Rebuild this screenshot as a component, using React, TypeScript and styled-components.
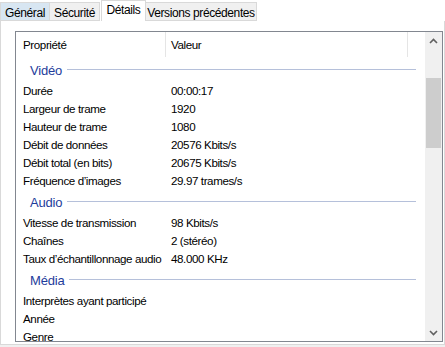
import React from "react";
import styled, { createGlobalStyle } from "styled-components";

const GlobalStyle = createGlobalStyle`
    html, body {
        margin: 0;
        padding: 0;
        background: #ffffff;
    }
    body {
        font-family: "Liberation Sans", Arial, sans-serif;
        font-size: 11.6px;
        letter-spacing: -0.4px;
        color: #000;
    }
`

const Window = styled.div`
    width: 445px;
    height: 347px;
    display: flex;
    flex-direction: column;
    background: #f0f0f0;
    overflow: hidden;
`

const TabStrip = styled.div`
    display: flex;
    align-items: flex-end;
    height: 21px;
    background: #ffffff;
    margin-bottom: -1px;
    position: relative;
    z-index: 1;
`

const Tab = styled.div<{ $width: number; $active?: boolean; $hover?: boolean }>`
    box-sizing: border-box;
    width: ${p => p.$width}px;
    height: ${p => (p.$active ? 21 : 19)}px;
    margin-left: ${p => (p.$active ? 1 : 0)}px;
    padding-top: ${p => (p.$active ? 2 : 3)}px;
    text-align: center;
    font-size: 12px;
    border: 1px solid #d9d9d9;
    border-bottom: ${p => (p.$active ? "none" : "1px solid #d9d9d9")};
    border-left: ${p => (p.$active ? "1px solid #d9d9d9" : "none")};
    background: ${p => (p.$active ? "#ffffff" : p.$hover ? "#d8e6f2" : "#f0f0f0")};
    white-space: nowrap;
    &:first-child {
        border-left: 1px solid #d9d9d9;
    }
`

const Panel = styled.div`
    box-sizing: border-box;
    height: 325px;
    background: #ffffff;
    border: 1px solid #d9d9d9;
    padding: 10px 1px 2px 14px;
`

const ListBox = styled.div`
    box-sizing: border-box;
    height: 311px;
    border: 1px solid #828790;
    display: flex;
    background: #ffffff;
`

const ListContent = styled.div`
    flex: 1;
    overflow: hidden;
    display: flex;
    flex-direction: column;
`

const HeaderRow = styled.div`
    display: flex;
    height: 25px;
    flex-shrink: 0;
`

const HeaderCell = styled.div<{ $width?: number; $pad: number }>`
    box-sizing: border-box;
    ${p => (p.$width ? `width: ${p.$width}px;` : "flex: 1;")}
    display: flex;
    align-items: center;
    padding-left: ${p => p.$pad}px;
    padding-bottom: 1px;
    border-right: 1px solid #e5e5e5;
`

const HeaderRest = styled.div`
    width: 17px;
`

const GroupHeader = styled.div`
    display: flex;
    align-items: center;
    height: 24px;
    flex-shrink: 0;
    padding: 2px 9px 0 14px;
    box-sizing: border-box;
    color: #1e3c9b;
    font-size: 13px;
    letter-spacing: -0.2px;
    gap: 5px;
`

const GroupLine = styled.div`
    flex: 1;
    height: 1px;
    background: #b5c0da;
    margin-top: -1px;
`

const Row = styled.div`
    display: flex;
    height: 18px;
    flex-shrink: 0;
    align-items: center;
    white-space: nowrap;
`

const PropCell = styled.div`
    width: 149px;
    flex-shrink: 0;
    padding-left: 7px;
    box-sizing: border-box;
`

const ValueCell = styled.div`
    padding-left: 6px;
`

const ScrollBar = styled.div`
    width: 17px;
    background: #f0f0f0;
    display: flex;
    flex-direction: column;
`

const ScrollButton = styled.div`
    height: 17px;
    display: flex;
    align-items: center;
    justify-content: center;
`

const Track = styled.div`
    flex: 1;
    padding-top: 29px;
`

const Thumb = styled.div`
    height: 70px;
    margin: 0 1px;
    background: #cdcdcd;
`

const Chevron = ({ up }: { up?: boolean }) => (
    <svg width="9" height="6" viewBox="0 0 9 6">
        <path
            d={up ? "M1 5 L4.5 1.5 L8 5" : "M1 1 L4.5 4.5 L8 1"}
            fill="none"
            stroke="#606060"
            strokeWidth="1.6"
        />
    </svg>
)

type Item = [string, string]
type Group = { title: string; items: Item[] }

const groups: Group[] = [
    {
        title: "Vidéo",
        items: [
            ["Durée", "00:00:17"],
            ["Largeur de trame", "1920"],
            ["Hauteur de trame", "1080"],
            ["Débit de données", "20576 Kbits/s"],
            ["Débit total (en bits)", "20675 Kbits/s"],
            ["Fréquence d’images", "29.97 trames/s"],
        ],
    },
    {
        title: "Audio",
        items: [
            ["Vitesse de transmission", "98 Kbits/s"],
            ["Chaînes", "2 (stéréo)"],
            ["Taux d’échantillonnage audio", "48.000 KHz"],
        ],
    },
    {
        title: "Média",
        items: [
            ["Interprètes ayant participé", ""],
            ["Année", ""],
            ["Genre", ""],
        ],
    },
]

const tabs = [
    { label: "Général", width: 50, hover: true },
    { label: "Sécurité", width: 50 },
    { label: "Détails", width: 45, active: true },
    { label: "Versions précédentes", width: 111 },
]

const App = () => {
    return (
        <Window>
            <GlobalStyle />
            <TabStrip>
                {tabs.map(t => (
                    <Tab key={t.label} $width={t.width} $active={t.active} $hover={t.hover}>
                        {t.label}
                    </Tab>
                ))}
            </TabStrip>
            <Panel>
                <ListBox>
                    <ListContent>
                        <HeaderRow>
                            <HeaderCell $width={150} $pad={7}>Propriété</HeaderCell>
                            <HeaderCell $pad={5}>Valeur</HeaderCell>
                            <HeaderRest />
                        </HeaderRow>
                        {groups.map(g => (
                            <React.Fragment key={g.title}>
                                <GroupHeader>
                                    {g.title}
                                    <GroupLine />
                                </GroupHeader>
                                {g.items.map(([k, v]) => (
                                    <Row key={k}>
                                        <PropCell>{k}</PropCell>
                                        <ValueCell>{v}</ValueCell>
                                    </Row>
                                ))}
                            </React.Fragment>
                        ))}
                    </ListContent>
                    <ScrollBar>
                        <ScrollButton><Chevron up /></ScrollButton>
                        <Track><Thumb /></Track>
                        <ScrollButton><Chevron /></ScrollButton>
                    </ScrollBar>
                </ListBox>
            </Panel>
        </Window>
    )
}

export default App;
